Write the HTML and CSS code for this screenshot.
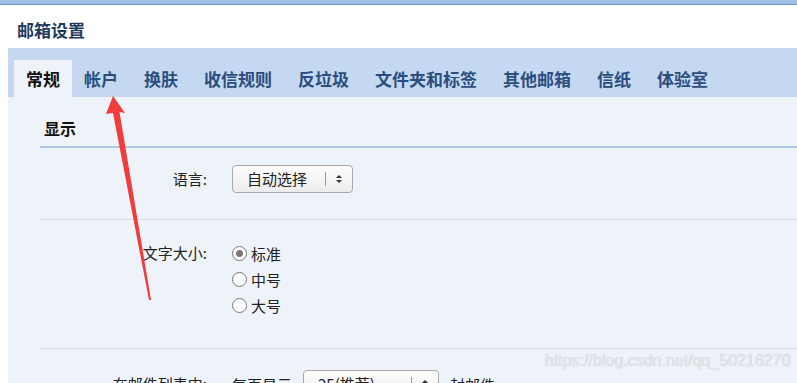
FILE: index.html
```html
<!DOCTYPE html>
<html lang="zh-CN">
<head>
    <meta charset="UTF-8">
    <meta name="viewport" content="width=device-width, initial-scale=1.0">
    <title>邮箱设置</title>
    <link rel="stylesheet" href="styles.css">
</head>
<body>
    <div class="topbar"></div>
    <div class="page">
        <div class="title">邮箱设置</div>
        <div class="tabs">
            <div class="tab active">常规</div>
            <div class="tab">帐户</div>
            <div class="tab">换肤</div>
            <div class="tab">收信规则</div>
            <div class="tab">反垃圾</div>
            <div class="tab">文件夹和标签</div>
            <div class="tab">其他邮箱</div>
            <div class="tab">信纸</div>
            <div class="tab">体验室</div>
        </div>
        <div class="content">
            <div class="section-head">显示</div>

            <div class="row row-lang">
                <div class="label">语言:</div>
                <div class="field">
                    <div class="select sel-lang">
                        <span class="sel-text">自动选择</span>
                        <span class="sel-arrow"><i class="up"></i><i class="down"></i></span>
                    </div>
                </div>
            </div>

            <div class="row row-size">
                <div class="label">文字大小:</div>
                <div class="field radios">
                    <label class="radio"><span class="dot checked"></span>标准</label>
                    <label class="radio"><span class="dot"></span>中号</label>
                    <label class="radio"><span class="dot"></span>大号</label>
                </div>
            </div>

            <div class="row row-list">
                <div class="label">在邮件列表中:</div>
                <div class="field inline">
                    <span>每页显示</span>
                    <div class="select sel-count">
                        <span class="sel-text">25(推荐)</span>
                        <span class="sel-arrow"><i class="up"></i><i class="down"></i></span>
                    </div>
                    <span>封邮件</span>
                </div>
            </div>
        </div>
    </div>

    <!-- annotation arrow drawn over the screenshot -->
    <svg class="arrow" width="797" height="383" viewBox="0 0 797 383">
        <polygon points="113,96 125,113 119.5,112 151,300 149,300 113,113 106,114" fill="#f03c3c"/>
    </svg>
    <div class="watermark">https://blog.csdn.net/qq_50216270</div>
</body>
</html>
```

FILE: styles.css
```css
body {
    margin: 0;
    background-color: #fff;
    font-family: "Noto Sans CJK SC", "Liberation Sans", sans-serif;
    font-size: 15px;
    color: #222;
    width: 797px;
    height: 383px;
    overflow: hidden;
    position: relative;
}

.topbar {
    height: 4px;
    background-color: #9fbfe6;
    border-bottom: 1px solid #7197c8;
}

.page {
    padding-left: 8px;
}

.title {
    height: 43px;
    line-height: 50px;
    padding-left: 9px;
    font-size: 17px;
    font-weight: bold;
    color: #1f3a5e;
}

.tabs {
    display: flex;
    align-items: flex-end;
    height: 49px;
    padding-left: 6px;
    background-color: #c4d9f1;
}

.tab {
    height: 37px;
    line-height: 37px;
    padding: 0 12px;
    margin-right: 2px;
    font-size: 17px;
    font-weight: bold;
    color: #2c4d7d;
}

.tab.active {
    margin-right: 0;
    background-color: #eef3fa;
    color: #111;
}

.content {
    background-color: #eef3fa;
    padding-left: 32px;
    height: 300px;
}

.section-head {
    height: 49px;
    line-height: 62px;
    padding-left: 4px;
    font-size: 16px;
    font-weight: bold;
    color: #111;
    border-bottom: 2px solid #b1c9e6;
}

.row {
    display: flex;
    border-bottom: 1px solid #d5dbe3;
}

.label {
    width: 167px;
    text-align: right;
    line-height: 26px;
    color: #222;
}

.field {
    margin-left: 25px;
}

.row-lang {
    padding: 17px 0 26px;
}

.row-lang .label {
    line-height: 28px;
}

.row-size {
    padding: 20px 0 30px;
}

.row-list {
    padding: 17px 0 20px;
    border-bottom: none;
}

.row-list .label {
    line-height: 28px;
    margin-top: 4px;
}

.select {
    display: flex;
    align-items: center;
    height: 26px;
    border: 1px solid #a9a9a9;
    border-radius: 4px;
    background: linear-gradient(#fdfdfd, #ececec);
    box-sizing: content-box;
}

.sel-lang {
    width: 119px;
}

.sel-count {
    width: 134px;
}

.sel-text {
    flex: 1;
    padding-left: 14px;
    line-height: 26px;
}

.sel-arrow {
    display: flex;
    flex-direction: column;
    align-items: center;
    gap: 2px;
    width: 26px;
    height: 14px;
    justify-content: center;
    border-left: 1px solid #9a9a9a;
}

.sel-arrow i {
    width: 0;
    height: 0;
    border-left: 3px solid transparent;
    border-right: 3px solid transparent;
}

.sel-arrow .up {
    border-bottom: 3px solid #333;
}

.sel-arrow .down {
    border-top: 3px solid #333;
}

.radios {
    display: flex;
    flex-direction: column;
}

.radio {
    display: flex;
    align-items: center;
    height: 26px;
    gap: 4px;
}

.dot {
    width: 13px;
    height: 13px;
    border: 1px solid #777;
    border-radius: 50%;
    background-color: #fff;
    position: relative;
}

.dot.checked::after {
    content: "";
    position: absolute;
    left: 3px;
    top: 3px;
    width: 7px;
    height: 7px;
    border-radius: 50%;
    background-color: #777;
}

.inline {
    display: flex;
    align-items: center;
    gap: 11px;
    margin-top: 4px;
}

.arrow {
    position: absolute;
    left: 0;
    top: 0;
    pointer-events: none;
}

.watermark {
    position: absolute;
    left: 545px;
    top: 352px;
    font-family: "Liberation Sans", sans-serif;
    font-size: 16px;
    color: #e4e7ec;
    text-shadow: 0 0 1px #b9bec6;
}
```
